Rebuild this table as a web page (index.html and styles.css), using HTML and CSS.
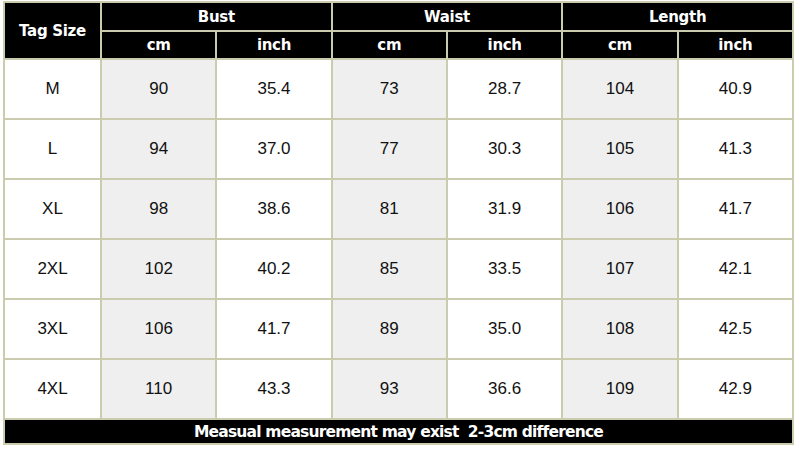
FILE: index.html
```html
<!DOCTYPE html>
<html>
<head>
<meta charset="utf-8">
<link rel="stylesheet" href="styles.css">
</head>
<body>
<div class="chart">
  <div class="cell head tag">Tag Size</div>
  <div class="cell head group">Bust</div>
  <div class="cell head group">Waist</div>
  <div class="cell head group">Length</div>
  <div class="cell head">cm</div><div class="cell head">inch</div>
  <div class="cell head">cm</div><div class="cell head">inch</div>
  <div class="cell head">cm</div><div class="cell head">inch</div>

  <div class="cell size">M</div><div class="cell cm">90</div><div class="cell">35.4</div><div class="cell cm">73</div><div class="cell">28.7</div><div class="cell cm">104</div><div class="cell">40.9</div>
  <div class="cell size">L</div><div class="cell cm">94</div><div class="cell">37.0</div><div class="cell cm">77</div><div class="cell">30.3</div><div class="cell cm">105</div><div class="cell">41.3</div>
  <div class="cell size">XL</div><div class="cell cm">98</div><div class="cell">38.6</div><div class="cell cm">81</div><div class="cell">31.9</div><div class="cell cm">106</div><div class="cell">41.7</div>
  <div class="cell size">2XL</div><div class="cell cm">102</div><div class="cell">40.2</div><div class="cell cm">85</div><div class="cell">33.5</div><div class="cell cm">107</div><div class="cell">42.1</div>
  <div class="cell size">3XL</div><div class="cell cm">106</div><div class="cell">41.7</div><div class="cell cm">89</div><div class="cell">35.0</div><div class="cell cm">108</div><div class="cell">42.5</div>
  <div class="cell size">4XL</div><div class="cell cm">110</div><div class="cell">43.3</div><div class="cell cm">93</div><div class="cell">36.6</div><div class="cell cm">109</div><div class="cell">42.9</div>

  <div class="cell head foot">Measual measurement may exist &nbsp;2-3cm difference</div>
</div>
</body>
</html>
```
FILE: styles.css
```css
html, body {
  margin: 0;
  padding: 0;
  background: #ffffff;
}
body {
  padding: 1px 0 0 3px;
}
.chart {
  display: grid;
  grid-template-columns: 95px repeat(6, 1fr);
  grid-template-rows: 27px 26px repeat(6, 58px) 23px;
  gap: 2px;
  width: 787px;
  background: #cbcbae;
  border: 2px solid #cbcbae;
}
.cell {
  display: flex;
  align-items: center;
  justify-content: center;
  background: #ffffff;
  color: #111111;
  font-family: "Liberation Sans", Arial, sans-serif;
  font-size: 17px;
}
.cell.cm {
  background: #efefef;
}
.cell.head {
  background: #000000;
  color: #ffffff;
  font-family: "DejaVu Sans", Verdana, sans-serif;
  font-weight: bold;
  font-size: 15px;
  letter-spacing: -0.3px;
}
.cell.tag {
  grid-row: span 2;
}
.cell.group {
  grid-column: span 2;
}
.cell.foot {
  grid-column: span 7;
  font-size: 15.5px;
  letter-spacing: -0.8px;
  padding-top: 1px;
}
```
